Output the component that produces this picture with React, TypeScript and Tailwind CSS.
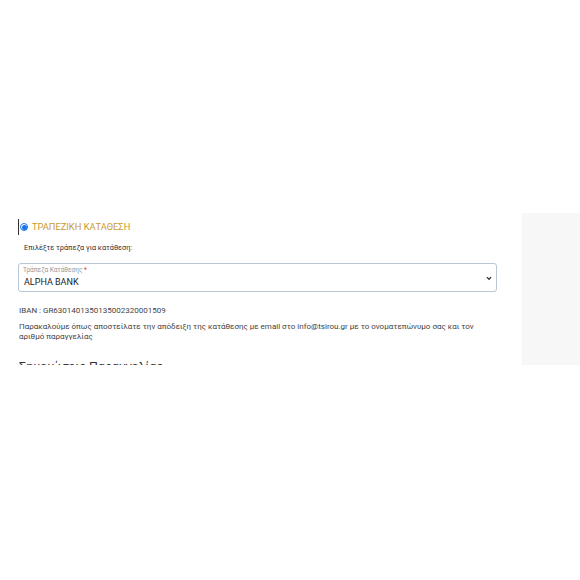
import React from 'react';

export default function App() {
  return (
    <div className="w-[580px] h-[580px] bg-white font-['Roboto',sans-serif]">
      <div className="h-[213px]" />
      <div className="flex h-[152px] overflow-hidden">
        {/* Payment section */}
        <div className="flex-1 pl-[18px] pr-[25px]">
          <div className="flex items-center h-[16px] mt-[6px] border-l border-[#333] pl-[1px]">
            <span className="w-[8px] h-[8px] rounded-full border border-[#1a73e8] flex items-center justify-center">
              <span className="w-[5px] h-[5px] rounded-full bg-[#1a73e8]" />
            </span>
            <span className="ml-[4px] text-[9.3px] text-[#c99a2e] leading-none">ΤΡΑΠΕΖΙΚΗ ΚΑΤΑΘΕΣΗ</span>
          </div>
          <p className="mt-[8px] ml-[6px] text-[7.3px] text-[#333] leading-[10px]">Επιλέξτε τράπεζα για κατάθεση:</p>
          <div className="relative mt-[10px] h-[29px] border border-[#b9c6d6] rounded-[3px] px-[4px]">
            <div className="text-[6.5px] text-[#999] leading-none mt-[3px]">
              Τράπεζα Κατάθεσης <span className="text-[#e53935]">*</span>
            </div>
            <div className="text-[9px] text-[#222] leading-none mt-[4px] ml-[1px]">ALPHA BANK</div>
            <svg className="absolute right-[4px] top-[11px] w-[6px] h-[6px]" viewBox="0 0 10 10" fill="none" stroke="#333" strokeWidth={2.2}>
              <path d="M1.5 3.5 5 7l3.5-3.5" />
            </svg>
          </div>
          <p className="mt-[14px] ml-[1px] text-[8px] text-[#444] leading-[10px]">IBAN : GR6301401350135002320001509</p>
          <p className="mt-[6px] ml-[1px] text-[8px] text-[#444] leading-[10px] pr-[20px]">
            Παρακαλούμε όπως αποστείλατε την απόδειξη της κατάθεσης με email στο info@tsirou.gr με το ονοματεπώνυμο σας και τον αριθμό παραγγελίας
          </p>
          <h3 className="mt-[19px] ml-[1px] text-[12.5px] text-[#333] leading-none">Σημειώσεις Παραγγελίας</h3>
        </div>
        <div className="w-[58px] bg-[#f7f7f7]" />
      </div>
    </div>
  );
}
